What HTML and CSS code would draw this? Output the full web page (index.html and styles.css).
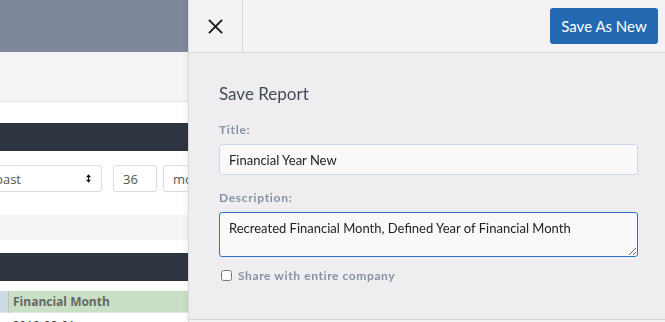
FILE: index.html
```html
<!DOCTYPE html>
<html lang="en">
<head>
    <meta charset="UTF-8">
    <meta name="viewport" content="width=device-width, initial-scale=1.0">
    <title>Save Report</title>
    <link rel="stylesheet" href="styles.css">
</head>
<body>
    <div class="page">
        <div class="page-top"></div>
        <div class="toolbar"></div>

        <div class="section">
            <div class="section-bar"></div>
            <div class="filters">
                <div class="select">
                    <span>past</span>
                    <svg class="caret" viewBox="0 0 6 10" fill="currentColor">
                        <path d="M3 0L6 3.5H0z"/>
                        <path d="M3 10L0 6.5H6z"/>
                        <rect x="2.4" y="3" width="1.2" height="4"/>
                    </svg>
                </div>
                <div class="field num">36</div>
                <div class="field unit">months</div>
            </div>
            <div class="band"></div>
        </div>

        <div class="section">
            <div class="section-bar"></div>
            <table class="grid">
                <thead>
                    <tr>
                        <th class="key"></th>
                        <th class="dim">Financial Month</th>
                    </tr>
                </thead>
                <tbody>
                    <tr>
                        <td class="key"></td>
                        <td>2019-02-01</td>
                    </tr>
                </tbody>
            </table>
        </div>
    </div>

    <aside class="drawer">
        <header class="drawer-head">
            <button class="close-btn" aria-label="Close">
                <svg viewBox="0 0 16 16" fill="none" stroke="currentColor" stroke-width="2">
                    <path d="M1 1L15 15M15 1L1 15"/>
                </svg>
            </button>
            <button class="save-new-btn">Save As New</button>
        </header>

        <div class="drawer-body">
            <h2 class="drawer-title">Save Report</h2>

            <label class="form-label" for="title">Title:</label>
            <input class="form-input" type="text" id="title" value="Financial Year New">

            <label class="form-label" for="description">Description:</label>
            <textarea class="form-input form-textarea" id="description">Recreated Financial Month, Defined Year of Financial Month</textarea>

            <label class="check-row">
                <input type="checkbox">
                <span>Share with entire company</span>
            </label>
        </div>

        <footer class="drawer-foot"></footer>
    </aside>
</body>
</html>
```

FILE: styles.css
```css
body {
    margin: 0;
    font-family: "Open Sans", Arial, sans-serif;
    background-color: #ffffff;
    color: #333333;
    overflow: hidden;
}

/* background page */

.page {
    width: 100%;
}

.page-top {
    height: 52px;
    background-color: #7f879a;
}

.toolbar {
    height: 50px;
    box-sizing: border-box;
    background-color: #f5f5f5;
    border-bottom: 1px solid #e3e3e3;
}

.section {
    padding-top: 21px;
}

.section + .section {
    padding-top: 13px;
}

.section-bar {
    height: 28px;
    background-color: #2e3440;
}

.filters {
    display: flex;
    align-items: center;
    margin-left: -18px;
    padding: 14px 0 23px;
}

.select,
.field {
    height: 27px;
    box-sizing: border-box;
    border: 1px solid #dddddd;
    border-radius: 3px;
    display: flex;
    align-items: center;
    font-size: 13px;
    color: #555555;
}

.select {
    width: 120px;
    padding: 0 10px 0 12px;
    justify-content: space-between;
}

.caret {
    width: 5px;
    height: 9px;
    color: #111111;
}

.field {
    padding: 0 9px;
}

.num {
    width: 44px;
    margin-left: 11px;
}

.unit {
    width: 90px;
    margin-left: 6px;
}

.band {
    height: 25px;
    background-color: #f5f5f5;
}

.grid {
    width: 100%;
    border-collapse: collapse;
    margin-top: 10px;
    font-size: 12px;
}

.grid th {
    height: 21px;
    padding: 0 4px;
    text-align: left;
    font-weight: 700;
    color: #666666;
}

.grid th.key {
    width: 0;
    background-color: #cdd9e4;
    border-right: 1px solid #b9c7b5;
}

.grid th.dim {
    background-color: #c9dfc6;
}

.grid td {
    padding: 4px 4px;
    color: #333333;
    border-top: 1px solid #e6e6e6;
}

/* drawer */

.drawer {
    position: fixed;
    top: 0;
    right: 0;
    bottom: 0;
    width: 476px;
    display: flex;
    flex-direction: column;
    background-color: #eeeef0;
    box-shadow: -1px 0 0 #d9d9de, -3px 0 6px rgba(0, 0, 0, 0.06);
    font-family: Lato, "Open Sans", Arial, sans-serif;
}

.drawer-head {
    height: 53px;
    box-sizing: border-box;
    display: flex;
    align-items: center;
    background-color: #f3f3f5;
    border-bottom: 1px solid #d9d9de;
}

.close-btn {
    width: 54px;
    height: 52px;
    padding: 0;
    border: none;
    border-right: 1px solid #d6d6db;
    background: transparent;
    color: #1a1a1a;
    display: flex;
    align-items: center;
    justify-content: center;
    cursor: pointer;
}

.close-btn svg {
    width: 15px;
    height: 15px;
}

.save-new-btn {
    margin-left: auto;
    margin-right: 7px;
    width: 108px;
    height: 36px;
    border: none;
    border-radius: 3px;
    background-color: #2369b1;
    color: #ffffff;
    font-family: Lato, Arial, sans-serif;
    font-size: 15px;
    cursor: pointer;
}

.drawer-body {
    height: 266px;
    box-sizing: border-box;
    padding: 31px 27px 0 30px;
}

.drawer-title {
    margin: 0;
    font-size: 17px;
    font-weight: 400;
    line-height: 1.2;
    color: #434a57;
}

.form-label {
    display: block;
    margin: 18px 0 7px;
    font-size: 12px;
    font-weight: 700;
    line-height: 15px;
    letter-spacing: 0.7px;
    color: #8891a4;
}

.form-input + .form-label {
    margin-top: 15px;
}

.form-input {
    display: block;
    width: 100%;
    height: 31px;
    box-sizing: border-box;
    padding: 0 9px;
    border: 1px solid #cfd9e4;
    border-radius: 3px;
    background-color: #f9f9f9;
    font-family: Lato, Arial, sans-serif;
    font-size: 13px;
    color: #222222;
    outline: none;
}

.form-textarea {
    height: 45px;
    padding: 7px 9px;
    line-height: 16px;
    border-color: #2b74c6;
    resize: vertical;
}

.check-row {
    display: flex;
    align-items: center;
    margin-top: 11px;
    font-size: 12px;
    font-weight: 700;
    letter-spacing: 0.6px;
    color: #8891a4;
}

.check-row input {
    width: 11px;
    height: 11px;
    margin: 0 6px 0 2px;
}

.drawer-foot {
    flex: 1;
    background-color: #f3f3f5;
    border-top: 1px solid #d5d5da;
}
```
